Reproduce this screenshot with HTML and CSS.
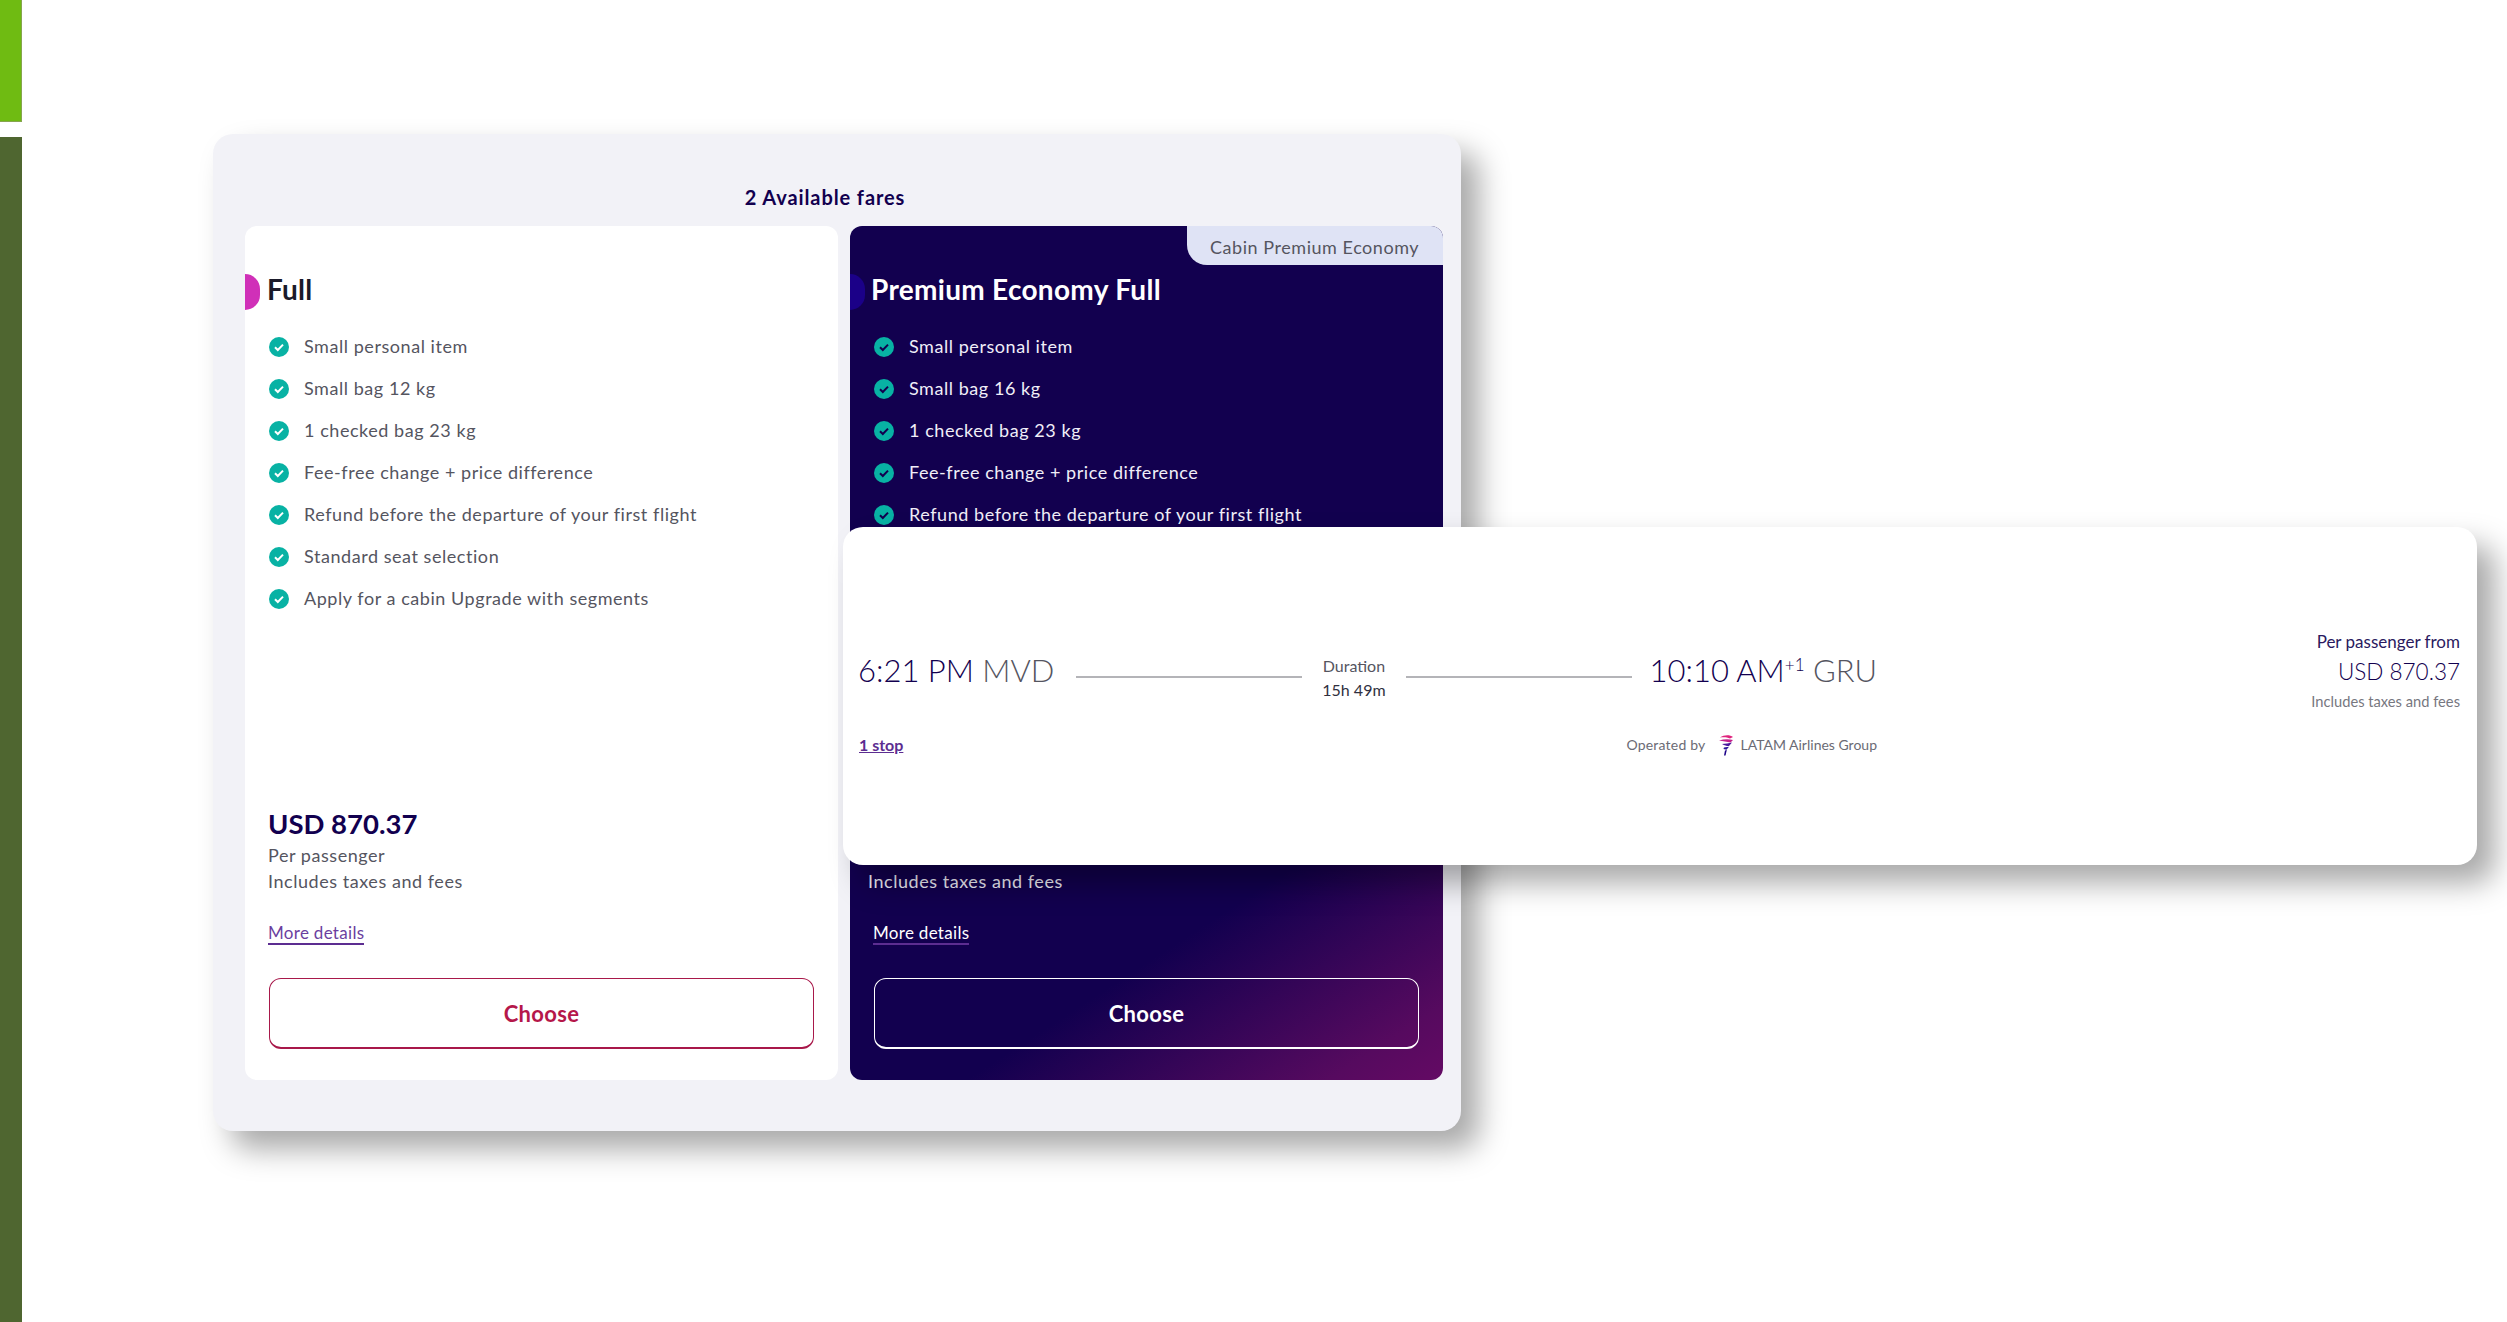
FILE: index.html
```html
<!DOCTYPE html>
<html lang="en">
<head>
<meta charset="utf-8">
<title>Available fares</title>
<link rel="stylesheet" href="styles.css">
</head>
<body>
<div class="page">
  <aside class="rail">
    <div class="rail-top"></div>
    <div class="rail-bottom"></div>
  </aside>
  <main class="stage">
    <section class="panel">
      <h2 class="panel-title">2 Available fares</h2>
      <div class="fares">
        <article class="fare">
          <div class="fare-head"><span class="accent"></span><h3 class="fare-name">Full</h3></div>
          <ul class="perks">
            <li class="perk"><svg class="check" viewBox="0 0 20 20"><circle cx="10" cy="10" r="10" fill="#08b2a4"/><path d="M6 10.3l2.8 2.7L14 7.6" fill="none" stroke="#fff" stroke-width="2"/></svg>Small personal item</li>
            <li class="perk"><svg class="check" viewBox="0 0 20 20"><circle cx="10" cy="10" r="10" fill="#08b2a4"/><path d="M6 10.3l2.8 2.7L14 7.6" fill="none" stroke="#fff" stroke-width="2"/></svg>Small bag 12 kg</li>
            <li class="perk"><svg class="check" viewBox="0 0 20 20"><circle cx="10" cy="10" r="10" fill="#08b2a4"/><path d="M6 10.3l2.8 2.7L14 7.6" fill="none" stroke="#fff" stroke-width="2"/></svg>1 checked bag 23 kg</li>
            <li class="perk"><svg class="check" viewBox="0 0 20 20"><circle cx="10" cy="10" r="10" fill="#08b2a4"/><path d="M6 10.3l2.8 2.7L14 7.6" fill="none" stroke="#fff" stroke-width="2"/></svg>Fee-free change + price difference</li>
            <li class="perk"><svg class="check" viewBox="0 0 20 20"><circle cx="10" cy="10" r="10" fill="#08b2a4"/><path d="M6 10.3l2.8 2.7L14 7.6" fill="none" stroke="#fff" stroke-width="2"/></svg>Refund before the departure of your first flight</li>
            <li class="perk"><svg class="check" viewBox="0 0 20 20"><circle cx="10" cy="10" r="10" fill="#08b2a4"/><path d="M6 10.3l2.8 2.7L14 7.6" fill="none" stroke="#fff" stroke-width="2"/></svg>Standard seat selection</li>
            <li class="perk"><svg class="check" viewBox="0 0 20 20"><circle cx="10" cy="10" r="10" fill="#08b2a4"/><path d="M6 10.3l2.8 2.7L14 7.6" fill="none" stroke="#fff" stroke-width="2"/></svg>Apply for a cabin Upgrade with segments</li>
          </ul>
          <div class="fare-foot">
            <p class="price">USD 870.37</p>
            <p class="note">Per passenger</p>
            <p class="note">Includes taxes and fees</p>
            <a class="details" href="#">More details</a>
          </div>
          <button class="choose" type="button">Choose</button>
        </article>
        <article class="fare fare-dark">
          <span class="cabin-tag">Cabin Premium Economy</span>
          <div class="fare-head"><span class="accent"></span><h3 class="fare-name">Premium Economy Full</h3></div>
          <ul class="perks">
            <li class="perk"><svg class="check" viewBox="0 0 20 20"><circle cx="10" cy="10" r="10" fill="#08b2a4"/><path d="M6 10.3l2.8 2.7L14 7.6" fill="none" stroke="#12004f" stroke-width="2"/></svg>Small personal item</li>
            <li class="perk"><svg class="check" viewBox="0 0 20 20"><circle cx="10" cy="10" r="10" fill="#08b2a4"/><path d="M6 10.3l2.8 2.7L14 7.6" fill="none" stroke="#12004f" stroke-width="2"/></svg>Small bag 16 kg</li>
            <li class="perk"><svg class="check" viewBox="0 0 20 20"><circle cx="10" cy="10" r="10" fill="#08b2a4"/><path d="M6 10.3l2.8 2.7L14 7.6" fill="none" stroke="#12004f" stroke-width="2"/></svg>1 checked bag 23 kg</li>
            <li class="perk"><svg class="check" viewBox="0 0 20 20"><circle cx="10" cy="10" r="10" fill="#08b2a4"/><path d="M6 10.3l2.8 2.7L14 7.6" fill="none" stroke="#12004f" stroke-width="2"/></svg>Fee-free change + price difference</li>
            <li class="perk"><svg class="check" viewBox="0 0 20 20"><circle cx="10" cy="10" r="10" fill="#08b2a4"/><path d="M6 10.3l2.8 2.7L14 7.6" fill="none" stroke="#12004f" stroke-width="2"/></svg>Refund before the departure of your first flight</li>
          </ul>
          <div class="fare-foot">
            <p class="price">USD 870.37</p>
            <p class="note">Per passenger</p>
            <p class="note">Includes taxes and fees</p>
            <a class="details" href="#">More details</a>
          </div>
          <button class="choose" type="button">Choose</button>
        </article>
      </div>
    </section>
    <section class="flight">
      <div class="itinerary">
        <div class="times">
          <span class="stamp">6:21 PM <span class="code">MVD</span></span>
          <span class="rule"></span>
          <span class="duration"><span class="duration-label">Duration</span><span class="duration-value">15h 49m</span></span>
          <span class="rule rule-right"></span>
          <span class="stamp">10:10 AM<sup class="plus">+1</sup> <span class="code">GRU</span></span>
        </div>
        <div class="meta">
          <a class="stops" href="#">1 stop</a>
          <span class="operator"><span class="operator-by">Operated by</span>
            <svg class="latam" viewBox="0 0 16 22"><path d="M2 3.500C6 .5 12 .5 15 3l-3 1.500C9 3 5 3 2 3.500z" fill="#e0257e"/><path d="M1 6.500C6 5 11 5 15 6l-2.500 2.500C9 7.500 5 7.500 1 6.500z" fill="#c2218c"/><path d="M4 10c3-.5 7-.5 10-1.500l-3 3.500c-2 .2-4-.5-7-2z" fill="#4b1a9c"/><path d="M6 13.500l5-.8-2.500 3-3-.7z" fill="#2a1398"/><path d="M6 21.500l1-5 1.800-.5-1.300 5.500z" fill="#1b0088"/></svg>
            <span class="operator-name">LATAM Airlines Group</span></span>
        </div>
      </div>
      <div class="quote">
        <span class="quote-label">Per passenger from</span>
        <span class="quote-price">USD 870.37</span>
        <span class="quote-note">Includes taxes and fees</span>
      </div>
    </section>
  </main>
</div>
</body>
</html>
```
FILE: styles.css
```css
* { box-sizing: border-box; }
html, body { margin: 0; padding: 0; background: #fff; }
body { font-family: "Lato", "Noto Sans", sans-serif; color: #12004f; }
.page { display: flex; width: 2507px; height: 1322px; overflow: hidden; }

.rail { display: flex; flex-direction: column; width: 22px; flex: none; }
.rail-top { height: 122px; background: #6fbb12; box-shadow: inset -1px -1px 0 #86a54f; }
.rail-bottom { flex: 1; margin-top: 15px; background: #4f6630; }

.stage { position: relative; flex: 1; padding: 134px 0 0 191px; }

.panel { width: 1248px; height: 997px; padding: 50px 18px 51px 32px; background: #f2f2f7; border-radius: 20px; box-shadow: 18px 18px 30px rgba(0,0,0,.34); }
.panel-title { margin: 0 0 16px; height: 26px; padding-right: 38px; font-size: 20px; line-height: 26px; font-weight: 700; letter-spacing: .9px; text-align: center; color: #12004f; }
.fares { display: grid; grid-template-columns: 593px 593px; gap: 12px; height: 854px; }

.fare { position: relative; display: flex; flex-direction: column; padding-top: 48px; padding-bottom: 31px; background: #fff; border-radius: 12px; color: #55555f; overflow: hidden; }
.fare-dark { background: linear-gradient(147deg, #12004f 75%, #560a5f 94%, #640a64 100%); color: #f0eef8; }
.cabin-tag { position: absolute; top: 0; right: 0; width: 256px; height: 39px; padding-left: 23px; background: #dfe3f5; border-bottom-left-radius: 20px; font-size: 18px; line-height: 42px; color: #55555f; letter-spacing: .55px; }

.fare-head { display: flex; align-items: flex-start; gap: 7px; height: 36px; }
.accent { width: 15px; height: 36px; flex: none; background: #d030b8; border-radius: 0 15px 15px 0; }
.fare-dark .accent { background: #1b0088; }
.fare-name { margin: 0; font-size: 28px; line-height: 30px; font-weight: 700; letter-spacing: .2px; color: #1a1a2a; }
.fare-dark .fare-name { margin-left: -1px; letter-spacing: .3px; color: #fff; }

.perks { list-style: none; margin: 15px 0 0; padding: 0 0 0 24px; }
.perk { display: flex; align-items: center; gap: 15px; height: 42px; font-size: 18px; line-height: 40px; letter-spacing: .55px; }
.check { width: 20px; height: 20px; margin-top: 2px; flex: none; }

.fare-foot { display: flex; flex-direction: column; align-items: flex-start; margin-top: auto; padding-left: 23px; }
.price { margin: 0; font-size: 27.5px; line-height: 36px; font-weight: 700; color: #12004f; }
.fare-dark .price { color: #fff; }
.note { margin: 0; font-size: 18px; line-height: 26px; letter-spacing: .55px; }
.details { margin-top: 29px; font-size: 17px; line-height: 20px; letter-spacing: .3px; color: #6b3fa0; text-decoration: none; border-bottom: 2px solid #5c2d91; }
.fare-dark .details { color: #fff; }
.fare-dark .note { position: relative; left: -5px; }

.choose { margin: 33px 24px 0; height: 71px; flex: none; background: transparent; border: 1px solid #a8184a; border-bottom-width: 2px; border-radius: 12px; font-family: inherit; font-size: 22px; font-weight: 700; letter-spacing: .3px; color: #b5174a; }
.fare-dark .choose { border-color: #fff; color: #fff; }

.flight { position: absolute; left: 821px; top: 527px; display: flex; align-items: flex-start; justify-content: space-between; width: 1634px; height: 338px; padding: 105px 17px 0 15px; background: #fff; border-radius: 20px; box-shadow: 18px 18px 30px rgba(0,0,0,.34); }
.itinerary { width: 1019px; padding-top: 10px; }
.times { display: flex; align-items: center; height: 70px; }
.stamp { margin-bottom: 14px; font-size: 31px; line-height: 40px; font-weight: 300; color: #12004f; white-space: nowrap; }
.code { color: #55555f; }
.plus { font-size: 17px; line-height: 0; font-weight: 300; }
.rule { flex: 1; height: 2px; margin: 0 20px 0 22px; background: #b4b4b8; }
.rule-right { margin: 0 18px 0 20px; }
.duration { display: flex; flex-direction: column; align-items: center; gap: 3px; font-size: 16px; line-height: 21px; }
.duration-label { color: #55555f; }
.duration-value { color: #303040; }
.meta { display: flex; align-items: center; justify-content: space-between; margin-top: 22px; padding-left: 1px; font-size: 14px; line-height: 20px; }
.stops { font-size: 16px; font-weight: 700; color: #5c2d91; }
.operator { display: flex; align-items: center; color: #6b6b75; }
.operator-by { letter-spacing: .2px; }
.operator-name { margin-left: 7px; }
.latam { width: 16px; height: 22px; margin-left: 12px; }

.quote { display: flex; flex-direction: column; align-items: flex-end; }
.quote-label { font-size: 17px; line-height: 20px; color: #2a1a60; }
.quote-price { margin-top: 5px; font-size: 22.500px; line-height: 30px; font-weight: 300; color: #12004f; }
.quote-note { margin-top: 4px; font-size: 14.700px; line-height: 20px; color: #77777f; }
```
